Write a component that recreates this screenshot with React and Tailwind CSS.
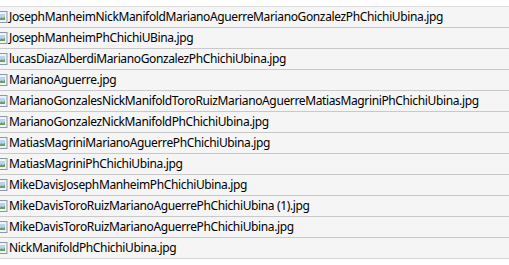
import React from 'react';

const files = [
  'JosephManheimNickManifoldMarianoAguerreMarianoGonzalezPhChichiUbina.jpg',
  'JosephManheimPhChichiUBina.jpg',
  'lucasDiazAlberdiMarianoGonzalezPhChichiUbina.jpg',
  'MarianoAguerre.jpg',
  'MarianoGonzalesNickManifoldToroRuizMarianoAguerreMatiasMagriniPhChichiUbina.jpg',
  'MarianoGonzalezNickManifoldPhChichiUbina.jpg',
  'MatiasMagriniMarianoAguerrePhChichiUbina.jpg',
  'MatiasMagriniPhChichiUbina.jpg',
  'MikeDavisJosephManheimPhChichiUbina.jpg',
  'MikeDavisToroRuizMarianoAguerrePhChichiUbina (1).jpg',
  'MikeDavisToroRuizMarianoAguerrePhChichiUbina.jpg',
  'NickManifoldPhChichiUbina.jpg',
];

function ImageIcon() {
  return (
    <svg width="8" height="12" viewBox="0 0 8 12" className="shrink-0">
      <rect x="-3" y="0.5" width="10" height="11" fill="#eef3f8" stroke="#8a99a8" />
      <rect x="-1" y="3" width="6" height="6" fill="#b9d3ea" />
      <path d="M-1 9 L1.5 6 L3 7.5 L5 5.5 L5 9 Z" fill="#6f9a5a" />
    </svg>
  );
}

export default function App() {
  return (
    <div className="w-[509px] h-[265px] bg-white overflow-hidden pt-[6px]" style={{ fontFamily: '"Segoe UI", "Noto Sans", sans-serif' }}>
      <div className="border-b border-[#d4d4d4]">
        {files.map((f, i) => (
          <div
            key={f}
            className={`h-[21px] flex items-center gap-[1px] bg-[#f5f5f5] border-t ${i === 0 ? 'border-[#e0e0e0]' : 'border-[#c9c9c9]'}`}
          >
            <ImageIcon />
            <span className="text-[12px] text-black whitespace-nowrap leading-none tracking-[-0.37px]">{f}</span>
          </div>
        ))}
      </div>
    </div>
  );
}
